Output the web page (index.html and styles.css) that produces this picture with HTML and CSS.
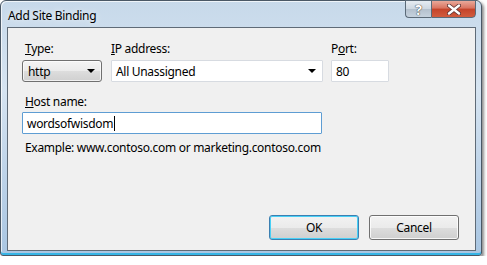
FILE: index.html
```html
<!DOCTYPE html>
<html lang="en">
<head>
  <meta charset="UTF-8" />
  <title>Add Site Binding</title>
  <link rel="stylesheet" href="styles.css">
</head>
<body>
  <div class="window">
    <div class="titlebar">
      <span class="title">Add Site Binding</span>
      <div class="caption">
        <span class="cap-btn help">?</span>
        <span class="cap-btn close">
          <svg width="14" height="11" viewBox="0 0 14 11">
            <path d="M2 1.5 L12 9.5 M12 1.5 L2 9.5" stroke="#5a3030" stroke-width="4" stroke-linecap="round"/>
            <path d="M2 1.5 L12 9.5 M12 1.5 L2 9.5" stroke="#fff" stroke-width="2.4" stroke-linecap="round"/>
          </svg>
        </span>
      </div>
    </div>

    <div class="client">
      <div class="row">
        <div class="field type-field">
          <label class="lbl indent"><u>T</u>ype:</label>
          <div class="combo list">http<span class="arrow"></span></div>
        </div>
        <div class="field ip-field">
          <label class="lbl"><u>I</u>P address:</label>
          <div class="combo edit">All Unassigned<span class="arrow"></span></div>
        </div>
        <div class="field port-field">
          <label class="lbl">P<u>o</u>rt:</label>
          <div class="textbox">80</div>
        </div>
      </div>

      <div class="field host-field">
        <label class="lbl indent"><u>H</u>ost name:</label>
        <div class="textbox focused">wordsofwisdom<span class="caret"></span></div>
      </div>
      <p class="example">Example: www.contoso.com or marketing.contoso.com</p>

      <div class="actions">
        <button class="btn default">OK</button>
        <button class="btn">Cancel</button>
      </div>
    </div>
  </div>
</body>
</html>
```

FILE: styles.css
```css
body {
  margin: 0;
  background-color: #fff;
  font-family: "Noto Sans", "Open Sans", sans-serif;
  font-size: 12px;
  letter-spacing: -0.3px;
  color: #000;
}
.window {
  box-sizing: border-box;
  width: 482px;
  height: 256px;
  display: flex;
  flex-direction: column;
  padding: 0 5px 4px 6px;
  border: 1px solid #4a5866;
  border-radius: 6px 6px 3px 3px;
  background: linear-gradient(to bottom, #c7d9ea 0%, #d6e4f1 35%, #bcd2e8 70%, #a9c6e2 100%);
  box-shadow: 2px 2px 3px rgba(0,0,0,0.45), inset 0 -2px 0 #35b5e6, inset 1px 1px 0 rgba(255,255,255,0.7);
}
.titlebar {
  height: 26px;
  display: flex;
  justify-content: space-between;
  align-items: flex-start;
}
.title {
  margin: 7px 0 0 1px;
  line-height: 15px;
  text-shadow: 0 0 6px rgba(255,255,255,0.9);
}
.caption {
  display: flex;
  margin-top: -1px;
  margin-right: 0;
}
.cap-btn {
  height: 18px;
  display: flex;
  align-items: center;
  justify-content: center;
  box-sizing: border-box;
  border: 1px solid #5b6a78;
}
.help {
  width: 26px;
  border-right: none;
  border-radius: 0 0 0 4px;
  background: linear-gradient(to bottom, #e6ecf2 0%, #cdd7e1 50%, #b3c0cd 51%, #c6d2de 100%);
  color: #fff;
  font-weight: bold;
  font-size: 14px;
  text-shadow: 0 0 1px #333, 0 0 1px #333;
}
.close {
  width: 45px;
  border-radius: 0 0 4px 0;
  background: linear-gradient(to bottom, #e9a99a 0%, #d9735f 45%, #c4432a 50%, #d15c3e 100%);
}
.client {
  flex: 1;
  display: flex;
  flex-direction: column;
  background-color: #f0f0f0;
  border: 1px solid #5f6b77;
  padding: 13px 16px 10px 14px;
}
.row {
  display: flex;
}
.field {
  display: flex;
  flex-direction: column;
}
.lbl {
  line-height: 15px;
  margin-bottom: 4px;
}
.indent {
  padding-left: 3px;
}
.type-field { width: 80px; margin-right: 9px; }
.ip-field { width: 212px; margin-right: 8px; }
.port-field { width: 58px; }
.host-field { width: 300px; margin-top: 12px; }
.host-field .lbl { margin-bottom: 3px; }
.combo, .textbox {
  box-sizing: border-box;
  height: 22px;
  display: flex;
  align-items: center;
  padding: 0 4px;
  background-color: #fff;
  border: 1px solid #d7dbe1;
  border-radius: 1px;
  position: relative;
}
.combo {
  justify-content: space-between;
}
.list {
  border: 1px solid #707070;
  border-radius: 3px;
  background: linear-gradient(to bottom, #f4f4f4 0%, #ebebeb 50%, #dddddd 51%, #d0d0d0 100%);
  box-shadow: inset 0 0 0 1px rgba(255,255,255,0.7);
  padding-left: 5px;
}
.arrow {
  width: 0;
  height: 0;
  border-left: 4px solid transparent;
  border-right: 4px solid transparent;
  border-top: 4px solid #000;
  margin-right: 2px;
}
.focused {
  border-color: #5e9dd3;
}
.caret {
  display: inline-block;
  width: 1px;
  height: 15px;
  background-color: #000;
  margin-left: 1px;
}
.example {
  margin: 6px 0 0 3px;
  line-height: 15px;
}
.actions {
  margin-top: auto;
  display: flex;
  justify-content: flex-end;
  gap: 10px;
}
.btn {
  width: 90px;
  height: 25px;
  font-family: inherit;
  font-size: 12px;
  letter-spacing: inherit;
  color: #000;
  border: 1px solid #707070;
  border-radius: 3px;
  background: linear-gradient(to bottom, #f2f2f2 0%, #ebebeb 50%, #dddddd 51%, #cfcfcf 100%);
  box-shadow: inset 0 0 0 1px rgba(255,255,255,0.8);
  padding: 0;
}
.btn.default {
  border-color: #3c7fb1;
  box-shadow: inset 0 0 0 1px #48d0f6;
}
```
